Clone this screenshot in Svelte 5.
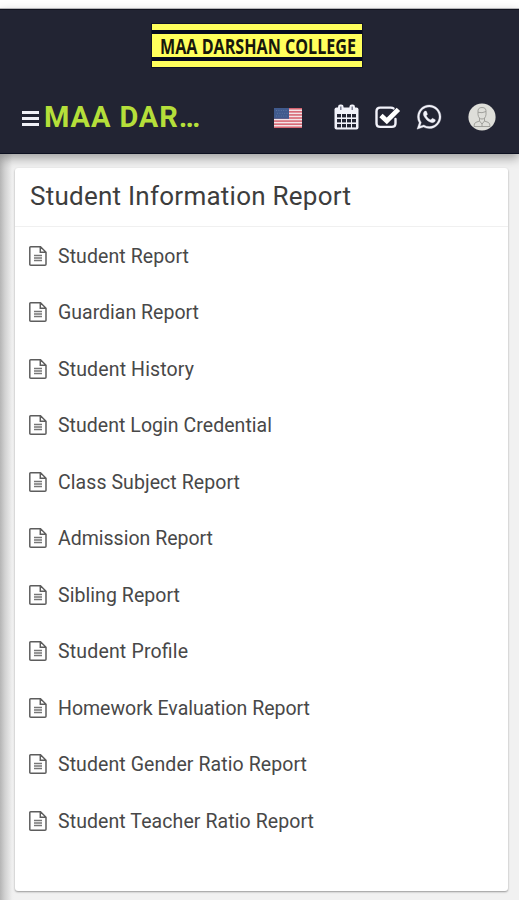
<script>
  const title = 'Student Information Report';

  const reports = [
    { label: 'Student Report', width: 131 },
    { label: 'Guardian Report', width: 141 },
    { label: 'Student History', width: 136 },
    { label: 'Student Login Credential', width: 214 },
    { label: 'Class Subject Report', width: 182 },
    { label: 'Admission Report', width: 155 },
    { label: 'Sibling Report', width: 122 },
    { label: 'Student Profile', width: 130 },
    { label: 'Homework Evaluation Report', width: 252 },
    { label: 'Student Gender Ratio Report', width: 249 },
    { label: 'Student Teacher Ratio Report', width: 256 }
  ];

  const stripes = [0, 1, 2, 3, 4, 5, 6];
</script>

<div class="page">
  <header>
    <div class="logo">
      <div class="bar"></div>
      <div class="plate">
        <svg width="210" height="23" viewBox="0 0 210 23">
          <text x="8" y="19.5" textLength="196" lengthAdjust="spacingAndGlyphs">MAA DARSHAN COLLEGE</text>
        </svg>
      </div>
      <div class="bar"></div>
    </div>

    <nav>
      <button class="toggle" aria-label="Menu">
        <span></span>
        <span></span>
        <span></span>
      </button>
      <span class="brand">MAA DAR…</span>

      <div class="actions">
        <svg class="flag" width="28" height="20" viewBox="0 0 28 20">
          <rect width="28" height="20" fill="#f3e4e7" />
          {#each stripes as i}
            <rect y={i * 3.08} width="28" height="1.54" fill="#d66370" />
          {/each}
          <rect width="15" height="10.8" fill="#405a8d" />
          <path
            d="M2 2.5H14M3 5.3H14M2 8H14"
            stroke="#627aa6"
            stroke-width="0.8"
            stroke-dasharray="1 1.4"
          />
        </svg>

        <svg class="calendar" width="25" height="26" viewBox="0 0 25 26">
          <rect x="0.5" y="3.5" width="24" height="22" rx="2" fill="#f2f2fa" />
          <rect x="4" y="0.5" width="5.6" height="7" rx="2.4" fill="#f2f2fa" />
          <rect x="15.4" y="0.5" width="5.6" height="7" rx="2.4" fill="#f2f2fa" />
          <path d="M6.8 2.5V6M18.2 2.5V6" stroke="#73768a" stroke-width="1.4" />
          {#each [10, 15, 20] as y}
            {#each [3, 8, 13, 18] as x}
              <rect {x} {y} width="4" height="3.4" fill="#222433" />
            {/each}
          {/each}
        </svg>

        <svg class="check" width="25" height="23" viewBox="0 0 25 23">
          <path
            d="M18.5 2.4Q17.5 1.6 15.8 1.6H5.2Q1.5 1.6 1.5 5.3V17.2Q1.5 20.9 5.2 20.9H16.8Q20.5 20.9 20.5 17.2V13"
            fill="none"
            stroke="#f2f2fa"
            stroke-width="2.4"
            stroke-linecap="round"
          />
          <path d="M6 9.4L11.8 14.9L23.4 3.4" fill="none" stroke="#fff" stroke-width="4.8" />
        </svg>

        <svg class="whatsapp" width="24" height="24" viewBox="0 26 1536 1536">
          <path
            fill="#f2f2fa"
            stroke="#f2f2fa"
            stroke-width="20"
            d="M985 878q13 0 97.500 44t89.500 53q2 5 2 15 0 33-17 76-16 39-71 65.500t-102 26.500q-57 0-190-62-98-45-170-118t-148-185q-72-107-71-194v-8q3-91 74-158 24-22 52-22 6 0 18 1.500t19 1.500q19 0 26.500 6.500t15.500 27.500q8 20 33 88t25 75q0 21-34.500 57.500t-34.500 46.500q0 7 5 15 34 73 102 137 56 53 151 101 12 7 22 7 15 0 54-48.500t52-48.500zm-203 530q127 0 243.500-50t200.500-134 134-200.500 50-243.500-50-243.500-134-200.500-200.500-134-243.500-50-243.500 50-200.500 134-134 200.500-50 243.500q0 203 120 368l-79 233 242-77q158 104 345 104zm0-1382q153 0 292.500 60t240.500 161 161 240.500 60 292.500-60 292.500-161 240.500-240.500 161-292.500 60q-195 0-365-94l-417 134 136-405q-108-178-108-389 0-153 60-292.500t161-240.500 240.500-161 292.500-60z"
          />
        </svg>

        <svg class="avatar" width="28" height="28" viewBox="0 0 28 28">
          <circle cx="14" cy="14" r="13.6" fill="#deded9" />
          <g fill="none" stroke="#999994" stroke-width="0.9">
            <path d="M10 9Q9.500 4.500 14 4.500Q18.500 4.500 18 9V11.500Q17.500 16 14 16Q10.500 16 10 11.500Z" />
            <path d="M10 9.300Q14 10.500 18 8.500M11.500 15V18L7.500 19.500Q6 20.500 6 23.500H22Q22 20.500 20.500 19.500L16.500 18V15" />
            <path d="M11.500 18L14 21L16.500 18M14 21V23.500" />
          </g>
        </svg>
      </div>
    </nav>
  </header>

  <main>
    <section class="card">
      <h3>
        <svg width="322" height="36">
          <text x="0" y="26.5" textLength="321">{title}</text>
        </svg>
      </h3>
      <ul>
        {#each reports as report}
          <li>
            <svg class="file" width="18" height="20" viewBox="0 0 18 20">
              <path
                d="M1.700 0.800H11.500L17 6.200V18.200Q17 19.200 16 19.200H1.800Q0.800 19.200 0.800 18.200V1.800Q0.800 0.800 1.700 0.800ZM11.300 1V6.300H17"
                fill="none"
                stroke="#5d5d5d"
                stroke-width="1.500"
              />
              <path d="M5 9.500H13M5 12H13M5 14.500H13" stroke="#777" stroke-width="1.500" />
            </svg>
            <svg class="label" width={report.width + 2} height="28">
              <text x="0" y="20.500" textLength={report.width}>{report.label}</text>
            </svg>
          </li>
        {/each}
      </ul>
    </section>
  </main>
</div>

<style>
  :global(body) {
    background: #fff;
    font-family: Roboto, 'Liberation Sans', sans-serif;
  }

  .page {
    box-sizing: border-box;
    height: 900px;
    padding-top: 9px;
    display: flex;
    flex-direction: column;
    overflow: hidden;
  }

  header {
    position: relative;
    box-sizing: border-box;
    height: 145px;
    padding-top: 14px;
    background: #222433;
    border-top: 1px solid #11131f;
    border-bottom: 1px solid #0c1020;
    box-shadow: 0 -1px 0 #b4b4b8, 0 4px 10px rgba(0, 0, 0, 0.35);
  }

  .logo {
    width: 210px;
    margin: 0 auto 0 152px;
    display: flex;
    flex-direction: column;
    gap: 4px;
    background: #060b20;
    box-shadow: 0 0 0 1px #111426;
  }

  .bar {
    height: 6px;
    background: #ffff5c;
  }

  .plate {
    height: 23px;
    background: #ffff5c;
  }

  .plate text {
    font: 700 22px/1 'Open Sans', sans-serif;
    fill: #17170c;
  }

  svg {
    display: block;
    flex: none;
    overflow: visible;
  }

  nav {
    display: flex;
    align-items: center;
    height: 44px;
    margin-top: 28px;
    padding: 0 23px 0 22px;
  }

  .toggle {
    display: flex;
    flex-direction: column;
    gap: 3px;
    width: 17px;
    padding: 0;
    margin-top: 3px;
    border: 0;
    background: none;
  }

  .toggle span {
    height: 3px;
    background: #f0f0f7;
  }

  .brand {
    margin-left: 5px;
    font-size: 29px;
    font-weight: 700;
    letter-spacing: 0.9px;
    line-height: 40px;
    color: #b5df3a;
    white-space: nowrap;
  }

  .actions {
    display: flex;
    align-items: center;
    margin-left: auto;
  }

  .flag {
    margin: 2px 32px 0 0;
  }

  .calendar {
    margin-right: 16px;
  }

  .check {
    margin-right: 17px;
  }

  .whatsapp {
    margin-right: 27px;
  }

  main {
    flex: 1;
    padding: 14px 11px 8px 15px;
    background: linear-gradient(to right, #b5b5b5, #d2d2d2 5px, #efefef 12px, #f1f1f1 14px);
  }

  .card {
    box-sizing: border-box;
    height: 723px;
    background: #fff;
    border-radius: 3px;
    box-shadow: 0 1px 2px rgba(0, 0, 0, 0.38);
  }

  h3 {
    box-sizing: border-box;
    height: 59px;
    margin: 0;
    padding: 10px 15px;
    border-bottom: 1px solid #f0f0f0;
  }

  h3 text {
    font-size: 26px;
    font-weight: 400;
    fill: #3d3d3d;
  }

  ul {
    margin: 0;
    padding: 0.5px 0 0 14px;
    list-style: none;
  }

  li {
    display: flex;
    align-items: center;
    gap: 11px;
    height: 56.5px;
  }

  .label text {
    font-size: 19.5px;
    fill: #484848;
  }
</style>
